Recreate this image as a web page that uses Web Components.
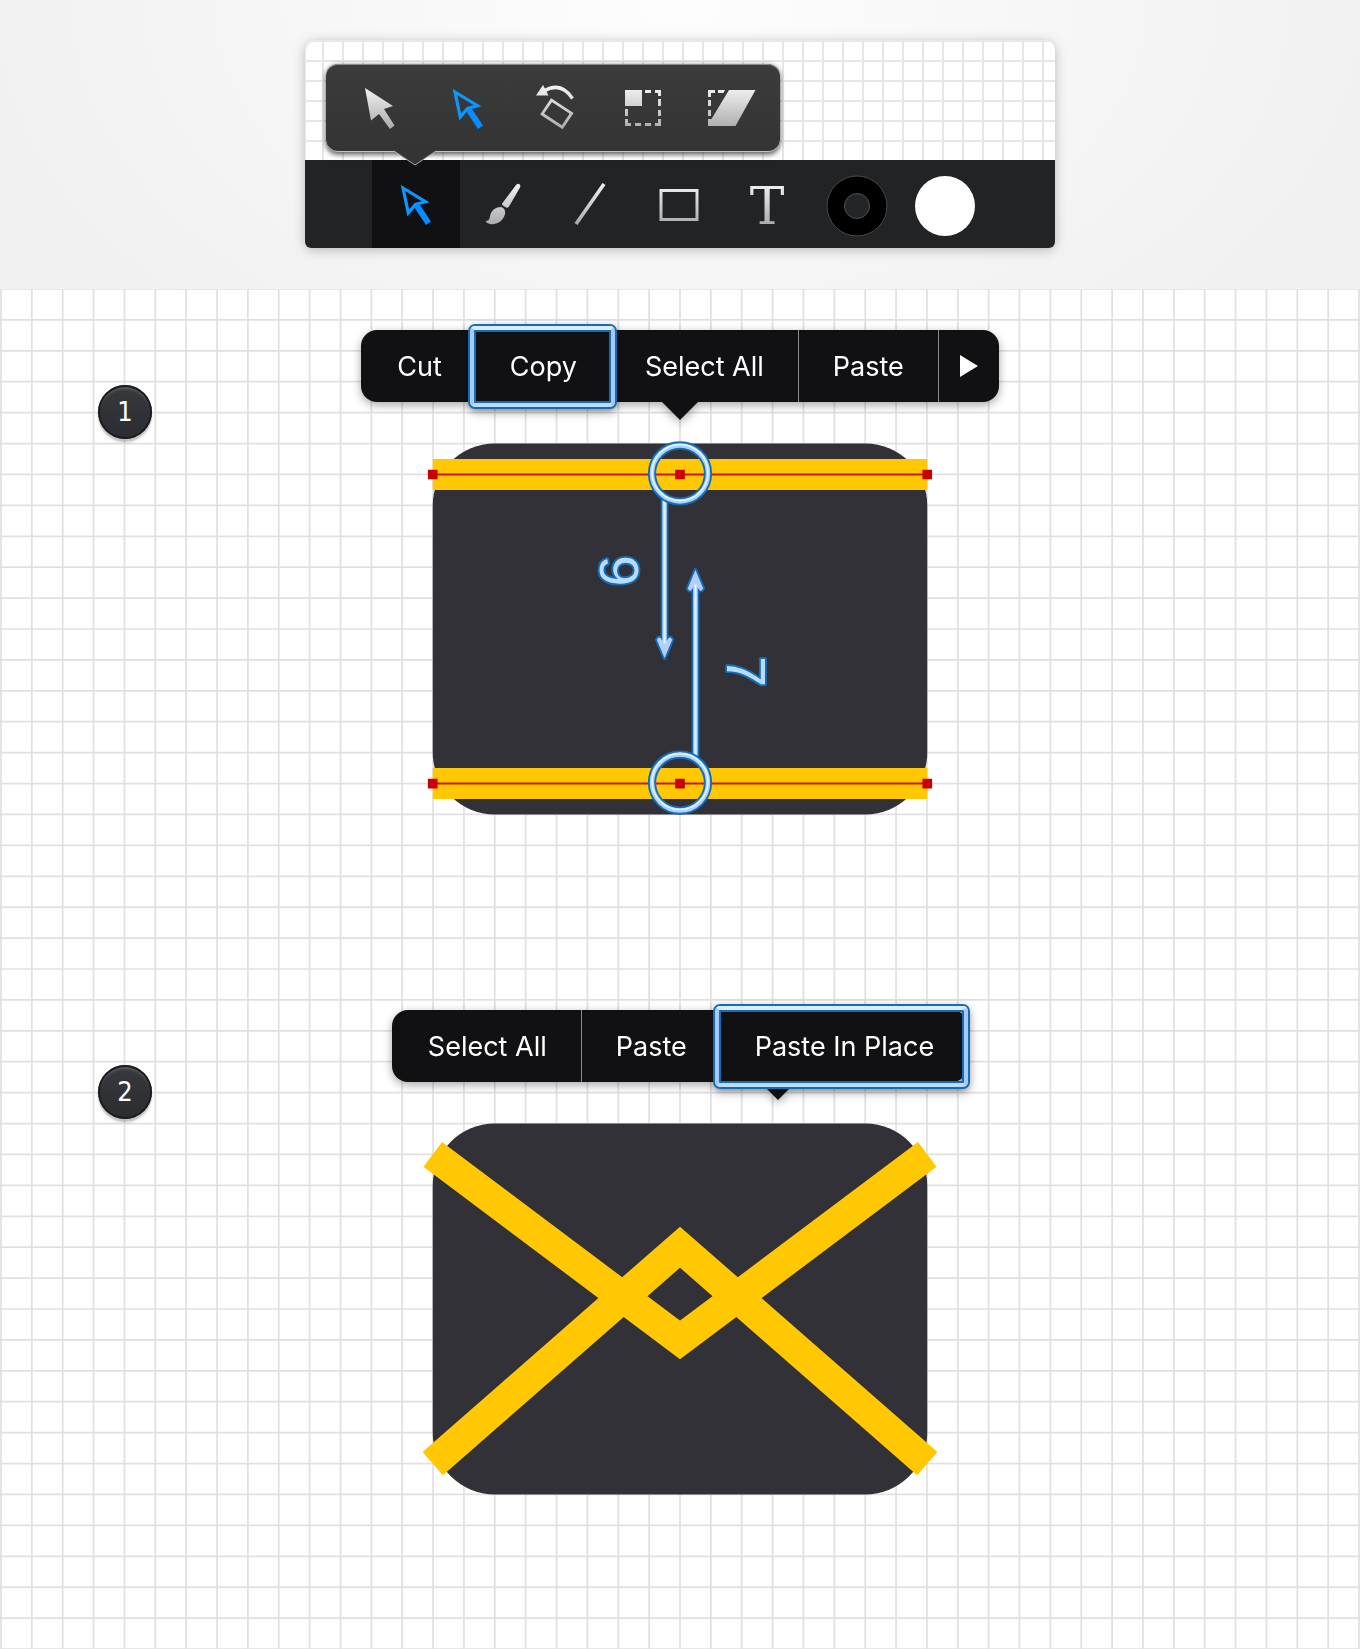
<!DOCTYPE html>
<html lang="en">
<head>
<meta charset="utf-8">
<meta name="viewport" content="width=device-width, initial-scale=1">
<title>Drawing the envelope</title>
<style>
  body { margin: 0; background: #fff; font-family: Inter, "Liberation Sans", sans-serif; }
</style>
</head>
<body>
<tutorial-page>
  <tool-panel slot="header"></tool-panel>

  <guide-step number="1">
    <context-menu slot="menu" style="--tip: 50%">
      <menu-action>Cut</menu-action>
      <menu-action marked>Copy</menu-action>
      <menu-action>Select All</menu-action>
      <menu-action divided>Paste</menu-action>
      <menu-action divided more></menu-action>
    </context-menu>
    <envelope-lines slot="art"></envelope-lines>
  </guide-step>

  <guide-step number="2">
    <context-menu slot="menu" style="--tip: 67%">
      <menu-action>Select All</menu-action>
      <menu-action divided>Paste</menu-action>
      <menu-action marked>Paste In Place</menu-action>
    </context-menu>
    <envelope-folded slot="art"></envelope-folded>
  </guide-step>
</tutorial-page>

<script>
const shadow = (el, html) => { el.attachShadow({ mode: 'open' }).innerHTML = html; };

/* Icons are drawn in an 88-unit square, the size of one tool button. */
const ICONS = {
  select: '<path fill="url(#g)" d="M29 24L57 42L48 45L58.500 61.500L54 65L43 50L35 56.500Z"/>',
  direct: '<path fill="none" stroke="#0a97ff" stroke-width="3.200" d="M31 28L53.500 41.700L43.500 44.500L36.300 53Z"/><path fill="#0a8aff" d="M42 47L47 43.500L59 61.500L54 65Z"/>',
  rotate: '<path fill="url(#g)" d="M31 21L24 31.500L36.500 31.500Z"/><path fill="none" stroke="url(#g)" stroke-width="3.400" d="M32 27Q49 17 60.500 34.500"/><path fill="none" stroke="url(#g)" stroke-width="2.800" d="M39.500 36.200L59.600 49.300L50.200 63.200L30.100 50Z"/>',
  scale: '<path fill="url(#g)" d="M25 26H42V42H25ZM45 26H51V29H45ZM55 26H61V32H58V29H55ZM58 35H61V42H58ZM58 46H61V52H58ZM58 55H61V62H55V59H58ZM45 59H51V62H45ZM35 59H41V62H35ZM25 45H28V52H25ZM25 55H28V59H31V62H25Z"/>',
  skew: '<path fill="url(#g)" d="M41 26H67.500L47.500 62H20V55H23.500ZM20 26H27V29H23V33H20ZM30 26H37L35.500 29H30ZM20 36H23V42H20ZM20 46H23V52H20Z"/>',
  brush: '<path fill="url(#g)" d="M56 25Q59 22.500 60.300 25.500Q60.500 26.500 60 27.500L49 46.500Q47.500 48.500 46 47.500L42.500 45.200Q41.500 44 42.500 43ZM41 47Q46 48.500 45 54C43 62 36 65 30 64Q26.500 63.500 25.500 61C31 61 29 56 31.500 52Q35 47 41 47Z"/>',
  line: '<path stroke="url(#g)" stroke-width="3.600" d="M28 64L56 24"/>',
  box: '<path fill="url(#g)" fill-rule="evenodd" d="M23.500 29H62.500V61H23.500ZM26.500 32V58H59.500V32Z"/>',
  text: '<text x="43" y="64" text-anchor="middle" font-family="DejaVu Serif, serif" font-size="52" fill="url(#g)">T</text>',
  stroke: '<circle cx="45" cy="46" r="30" fill="#000" stroke="#48494b"/><circle cx="45" cy="46" r="12.500" fill="#242527" stroke="#505153"/>',
  fill: '<circle cx="45" cy="46" r="30" fill="#fff"/>'
};

customElements.define('tool-button', class extends HTMLElement {
  connectedCallback() {
    const label = this.getAttribute('label');
    shadow(this, `<style>
      :host { display: block; width: 88px; height: 88px; }
      :host([active]) { background: #111113; }
      button { display: block; width: 100%; height: 100%; padding: 0; border: 0; background: none; cursor: pointer; }
      svg { display: block; width: 88px; height: 88px; }
    </style>
    <button type="button" aria-label="${label}"><svg viewBox="0 0 88 88" aria-hidden="true">
      <defs><linearGradient id="g" gradientUnits="userSpaceOnUse" x1="0" y1="22" x2="0" y2="66"><stop offset="0" stop-color="#f4f4f4"/><stop offset="1" stop-color="#a9a9ab"/></linearGradient></defs>
      ${ICONS[this.getAttribute('icon')]}</svg></button>`);
  }
});

customElements.define('tool-popover', class extends HTMLElement {
  connectedCallback() {
    shadow(this, `<style>
      :host { display: flex; position: relative; width: max-content; padding: 0 4px 0 10px;
        border-radius: 12px; background: linear-gradient(#3b3b3b, #343434);
        box-shadow: inset 0 1px 0 #8c8c8c, inset 0 -1px 0 #c4c4c4, 0 3px 5px rgba(0,0,0,.5), 0 0 5px rgba(0,0,0,.3); }
      svg { position: absolute; left: 68px; top: 100%; margin-top: -2px; width: 42px; height: 16px; }
    </style>
    <slot></slot>
    <svg viewBox="0 0 42 16" aria-hidden="true"><path d="M0 0H42V1L21 15L0 1Z" fill="#343434"/><path d="M0 1L21 15L42 1" fill="none" stroke="#aaa"/></svg>`);
  }
});

customElements.define('tool-panel', class extends HTMLElement {
  connectedCallback() {
    shadow(this, `<style>
      :host { display: block; width: 100%; max-width: 750px; border-radius: 10px 10px 6px 6px; background: #fff;
        box-shadow: 0 2px 12px rgba(0,0,0,.25); }
      .sheet { position: relative; z-index: 1; padding: 24px 21px 8px; border-radius: 10px 10px 0 0;
        box-shadow: inset 1px 1px 0 #ebebeb;
        background: linear-gradient(90deg, #e6e6e6 2px, transparent 2px) 17px 0 / 20px 20px,
                    linear-gradient(#e6e6e6 2px, transparent 2px) 0 20px / 20px 20px; }
      .bar { display: flex; justify-content: center; border-radius: 0 0 6px 6px; background: #222325; }
    </style>
    <div class="sheet">
      <tool-popover>
        <tool-button icon="select" label="Select"></tool-button>
        <tool-button icon="direct" label="Direct select"></tool-button>
        <tool-button icon="rotate" label="Rotate"></tool-button>
        <tool-button icon="scale" label="Scale"></tool-button>
        <tool-button icon="skew" label="Skew"></tool-button>
      </tool-popover>
    </div>
    <div class="bar" role="toolbar">
      <tool-button icon="direct" label="Selection tools" active></tool-button>
      <tool-button icon="brush" label="Brush"></tool-button>
      <tool-button icon="line" label="Line"></tool-button>
      <tool-button icon="box" label="Rectangle"></tool-button>
      <tool-button icon="text" label="Text"></tool-button>
      <tool-button icon="stroke" label="Stroke colour"></tool-button>
      <tool-button icon="fill" label="Fill colour"></tool-button>
    </div>`);
  }
});

customElements.define('menu-action', class extends HTMLElement {
  connectedCallback() {
    const more = this.hasAttribute('more');
    shadow(this, `<style>
      :host { display: block; position: relative; --mark-right: -4px; }
      :host(:last-of-type) { --mark-right: 0px; }
      :host([divided]) { border-left: 1px solid #8b8b8d; }
      :host([marked]) { z-index: 1; }
      button { display: block; box-sizing: border-box; height: 72px; padding: 2px 34px 0; border: 0; background: none; color: #fff;
        font: 400 27px/70px Inter, "Liberation Sans", sans-serif; white-space: nowrap; cursor: pointer; }
      :host(:first-of-type) button { padding-left: 36px; }
      :host([more]) button { padding: 0 21px; }
      svg { display: block; width: 18px; height: 22px; }
      .mark { display: none; }
      :host([marked]) .mark { display: block; position: absolute; inset: -4px var(--mark-right) -5px -6px; pointer-events: none;
        border: 4px solid; border-color: #d9ecff #a6c9f6 #bcdcff #a6c9f6; border-radius: 5px;
        box-shadow: 0 0 0 2px #146cb4, inset 0 0 0 2px #146cb4, 0 3px 5px rgba(0,0,0,.25); }
    </style>
    <button type="button"${more ? ' aria-label="More"' : ''}>${more
      ? '<svg viewBox="0 0 18 22" aria-hidden="true"><path d="M0 0L18 11L0 22Z" fill="#fff"/></svg>'
      : '<slot></slot>'}</button><span class="mark"></span>`);
  }
});

customElements.define('context-menu', class extends HTMLElement {
  connectedCallback() {
    shadow(this, `<style>
      :host { display: flex; position: relative; width: max-content; border-radius: 16px; background: #111113;
        filter: drop-shadow(0 3px 5px rgba(0,0,0,.35)); }
      .tip { position: absolute; top: 100%; left: var(--tip); width: 36px; height: 18px; margin-left: -18px;
        background: #111113; clip-path: polygon(0 0, 100% 0, 50% 100%); }
    </style><span class="tip"></span><slot></slot>`);
  }
});

/* Art uses 32 units per grid cell: 44 cells across, 22 down. */
const ART_STYLE = `<style>:host { display: block; } svg { display: block; width: 100%; height: auto; overflow: visible; }</style>`;
const BODY = '<rect x="448" y="160" width="512" height="384" rx="64" fill="#323137"/>';

customElements.define('envelope-lines', class extends HTMLElement {
  connectedCallback() {
    const bar = y => `<path d="M448 ${y}H960" stroke="#ffc803" stroke-width="32"/><path d="M448 ${y}H960" stroke="#cc1408" stroke-width="2"/>
      <path fill="#c80000" d="M443 ${y - 5}h10v10h-10zM699 ${y - 5}h10v10h-10zM955 ${y - 5}h10v10h-10z"/>`;
    const ring = y => `<g fill="none"><circle cx="704" cy="${y}" r="29" stroke="#146cb4" stroke-width="8.500"/>
      <circle cx="704" cy="${y}" r="29" stroke="#a9d0ff" stroke-width="4.600"/><circle cx="704" cy="${y - 1}" r="29" stroke="#e2f1ff" stroke-width="1.800"/></g>`;
    const head = 'l-8 -19q3 -5 5.500 1h5q2.500 -6 5.500 -1z';
    const arrow = (x, from, to) => `<path d="M${x} ${from}V${to - 13}" stroke="#146cb4" stroke-width="8"/>
      <path d="M${x} ${to}${head}" fill="#b2cffa" stroke="#146cb4" stroke-width="4" stroke-linejoin="round" paint-order="stroke"/>
      <path d="M${x} ${from}V${to - 15}" stroke="#b2d4ff" stroke-width="4.600"/><path d="M${x} ${from}V${to - 15}" stroke="#e2f1ff" stroke-width="2"/>`;
    shadow(this, `${ART_STYLE}
    <svg viewBox="0 0 1408 704">
      ${BODY}${bar(192)}${bar(512)}
      ${arrow(688, 218, 382)}
      <g transform="rotate(180 720 387)">${arrow(720, 290, 483)}</g>
      ${ring(191)}${ring(511)}
      <g font-family="Liberation Sans, sans-serif" font-size="58" text-anchor="middle" fill="#b9dbff" stroke="#146cb4" stroke-width="4" stroke-linejoin="round" paint-order="stroke">
        <text transform="translate(660 292) rotate(-90)">6</text>
        <text transform="translate(753 396) rotate(90)">7</text>
      </g>
    </svg>`);
  }
});

customElements.define('envelope-folded', class extends HTMLElement {
  connectedCallback() {
    shadow(this, `${ART_STYLE}
    <svg viewBox="0 0 1408 704">${BODY}
      <g fill="none" stroke="#ffc803" stroke-width="32"><path d="M448 192L704 384L960 192"/><path d="M448 512L704 288L960 512"/></g>
    </svg>`);
  }
});

customElements.define('guide-step', class extends HTMLElement {
  connectedCallback() {
    /* The outermost columns are pulled in by one unit so that their lines are not cut. */
    let d = '';
    for (let i = 0; i <= 44; i++) d += `M${1 + i * 1406 / 44} 0V704`;
    for (let i = 0; i <= 22; i++) d += `M0 ${i * 32}H1408`;
    shadow(this, `<style>
      :host { display: grid; }
      .grid, .art, .menu, .badge { grid-area: 1 / 1; min-width: 0; }
      .grid { display: block; width: 100%; height: auto; }
      .menu { justify-self: center; align-self: start; margin-top: 41px; z-index: 1; }
      .badge { place-self: start; margin: 96px 0 0 98px; width: 54px; height: 54px; border-radius: 50%; z-index: 1;
        color: #fff; font: 27px/54px "DejaVu Sans Condensed", "DejaVu Sans", sans-serif; text-align: center;
        background: linear-gradient(#38393d, #2b2c30);
        box-shadow: inset 0 0 0 2px #1c1d20, inset 0 4px 3px rgba(255,255,255,.18), 0 3px 1px rgba(0,0,0,.14), 0 4px 3px rgba(0,0,0,.1); }
    </style>
    <svg class="grid" viewBox="0 0 1408 704" aria-hidden="true"><path d="${d}" fill="none" stroke="#000" stroke-opacity=".12" stroke-width="1.800"/></svg>
    <div class="art"><slot name="art"></slot></div>
    <div class="menu"><slot name="menu"></slot></div>
    <div class="badge">${this.getAttribute('number')}</div>`);
  }
});

customElements.define('tutorial-page', class extends HTMLElement {
  connectedCallback() {
    shadow(this, `<style>
      :host { display: block; min-height: 100vh; }
      header { display: flex; justify-content: center; padding: 40px 0 41px;
        background: radial-gradient(ellipse 50% 150% at 50% 0, #fdfdfd, #f1f1f1); }
    </style>
    <header><slot name="header"></slot></header>
    <main><slot></slot></main>`);
  }
});
</script>
</body>
</html>
